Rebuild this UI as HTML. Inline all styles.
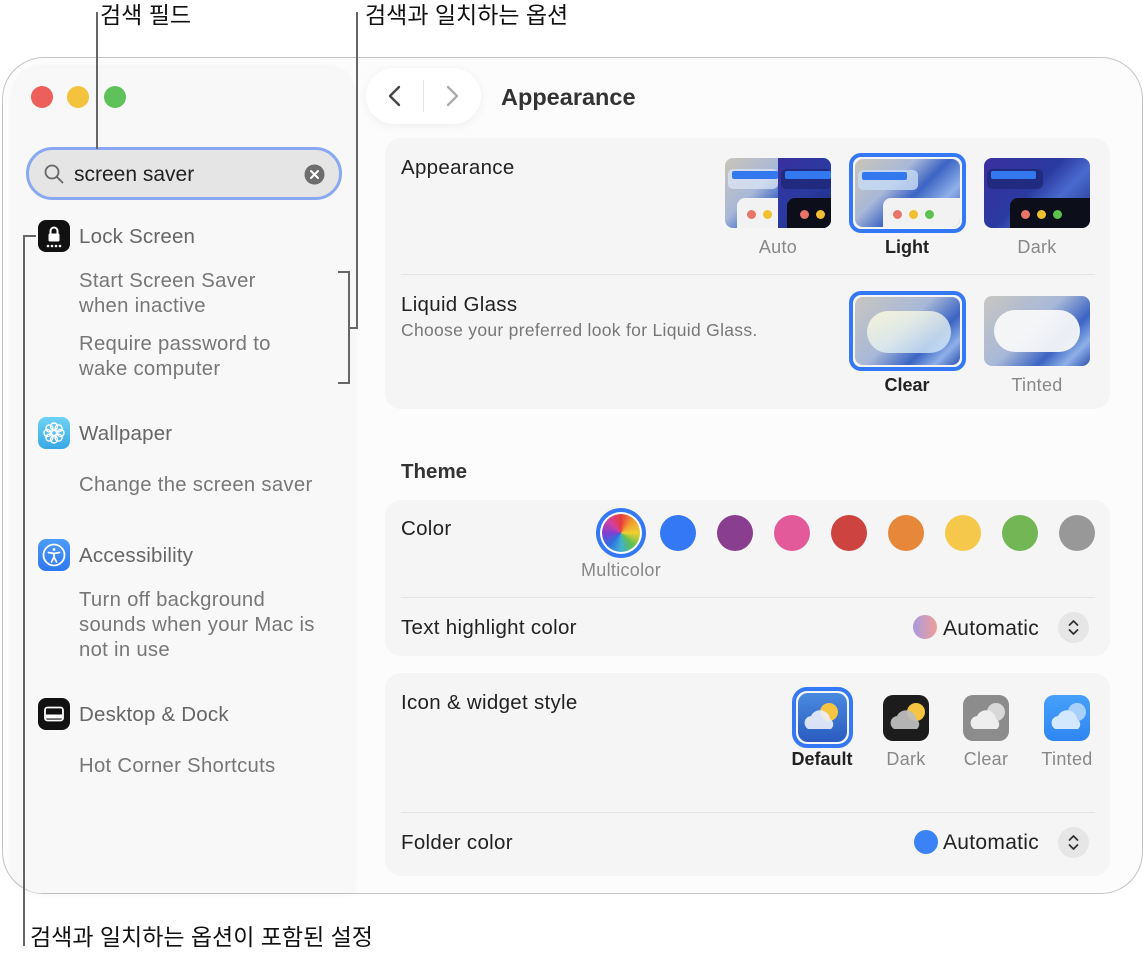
<!DOCTYPE html>
<html><head><meta charset="utf-8">
<style>
*{margin:0;padding:0;box-sizing:border-box}
body{width:1146px;height:960px;background:#fff;position:relative;overflow:hidden;font-family:"Liberation Sans","Noto Sans CJK KR",sans-serif;}
.a{position:absolute}
.t{position:absolute;white-space:nowrap;line-height:24px}
.ko{font-family:"Liberation Sans","Noto Sans CJK KR",sans-serif;font-size:23px;color:#111;line-height:30px}
.ln{position:absolute;background:#666}
.side{font-size:20.5px;color:#666;letter-spacing:.2px}
.sub{font-size:20.3px;color:#777;letter-spacing:.3px}
.card{position:absolute;left:385px;width:725px;background:#f5f5f5;border-radius:16px}
.lbl{font-size:20.5px;color:#222;letter-spacing:.3px}
.cap{font-size:18px;color:#888;text-align:center;width:120px;letter-spacing:.3px}
.capb{font-size:18px;color:#222;font-weight:bold;text-align:center;width:120px}
.dot{position:absolute;width:36px;height:36px;border-radius:50%}
.sep{position:absolute;left:401px;width:694px;height:1px;background:#e2e2e2}
.thumb{position:absolute;border-radius:8px;overflow:hidden;background:linear-gradient(135deg,#c9c4b8 0%,#a9b8d8 35%,#3c64c4 55%,#8fb0e8 75%,#2c4fb0 100%)}
.wg{position:absolute;border-radius:10px;overflow:hidden}
</style></head><body>

<!-- window -->
<div class="a" style="left:2px;top:57px;width:1141px;height:837px;border:1.5px solid #c4c4c4;border-radius:42px;background:#fcfcfc"></div>
<div class="a" style="left:14px;top:68px;width:339px;height:825px;background:#f8f8f8;border-radius:26px 26px 0 26px;box-shadow:0 0 8px rgba(0,0,0,.06)"></div>

<!-- annotations -->
<div class="t ko" style="left:100px;top:0px">검색 필드</div>
<div class="ln" style="left:96px;top:12px;width:2px;height:137px"></div>
<div class="t ko" style="left:365px;top:0px">검색과 일치하는 옵션</div>
<div class="ln" style="left:356px;top:12px;width:2px;height:317px"></div>
<div class="ln" style="left:348px;top:327px;width:10px;height:2px"></div>
<div class="ln" style="left:348px;top:271px;width:2px;height:113px"></div>
<div class="ln" style="left:338px;top:271px;width:12px;height:2px"></div>
<div class="ln" style="left:338px;top:382px;width:12px;height:2px"></div>
<div class="t ko" style="left:30px;top:922px">검색과 일치하는 옵션이 포함된 설정</div>
<div class="ln" style="left:23px;top:236px;width:2px;height:710px"></div>
<div class="ln" style="left:23px;top:235px;width:13px;height:2px"></div>

<div class="dot" style="left:31px;top:86px;width:22px;height:22px;background:#ec5f5b"></div>
<div class="dot" style="left:67px;top:86px;width:22px;height:22px;background:#f4c33e"></div>
<div class="dot" style="left:104px;top:86px;width:22px;height:22px;background:#5fc15a"></div>

<!-- search -->
<div class="a" style="left:26px;top:147px;width:316px;height:53px;border:3.5px solid #8aa8f2;border-radius:27px;background:#e5e5e5"></div>
<svg class="a" style="left:43px;top:163px" width="22" height="22" viewBox="0 0 22 22"><circle cx="9" cy="9" r="6.5" fill="none" stroke="#666" stroke-width="1.8"/><line x1="14" y1="14" x2="19.5" y2="19.5" stroke="#666" stroke-width="1.8" stroke-linecap="round"/></svg>
<div class="t" style="left:74px;top:163px;font-size:21px;color:#222">screen saver</div>
<svg class="a" style="left:304px;top:164px" width="21" height="21" viewBox="0 0 21 21"><circle cx="10.5" cy="10.5" r="10" fill="#6d6d6d"/><path d="M7 7L14 14M14 7L7 14" stroke="#fff" stroke-width="2" stroke-linecap="round"/></svg>
<div class="ln" style="left:96px;top:12px;width:2px;height:137px"></div>

<!-- sidebar items -->
<div class="a" style="left:38px;top:220px;width:32px;height:32px;border-radius:8px;background:#111"></div>
<svg class="a" style="left:38px;top:220px" width="32" height="32" viewBox="0 0 32 32"><path d="M12.5 14v-3a3.5 3.5 0 0 1 7 0v3" fill="none" stroke="#fff" stroke-width="2"/><rect x="10.5" y="13.5" width="11" height="8" rx="1.5" fill="#fff"/><g fill="#fff"><circle cx="10" cy="26" r="1.3"/><circle cx="14" cy="26" r="1.3"/><circle cx="18" cy="26" r="1.3"/><circle cx="22" cy="26" r="1.3"/></g></svg>
<div class="t side" style="left:79px;top:225px">Lock Screen</div>
<div class="t sub" style="left:79px;top:269px">Start Screen Saver</div>
<div class="t sub" style="left:79px;top:294px">when inactive</div>
<div class="t sub" style="left:79px;top:332px">Require password to</div>
<div class="t sub" style="left:79px;top:357px">wake computer</div>

<div class="a" style="left:38px;top:417px;width:32px;height:32px;border-radius:8px;background:linear-gradient(#6fd2f4,#38a8e6)"></div>
<svg class="a" style="left:38px;top:417px" width="32" height="32" viewBox="0 0 32 32" fill="none" stroke="#fff" stroke-width="1.4"><circle cx="16" cy="16" r="2.5"/><circle cx="16" cy="9.5" r="3.5"/><circle cx="16" cy="22.5" r="3.5"/><circle cx="9.5" cy="16" r="3.5"/><circle cx="22.5" cy="16" r="3.5"/><circle cx="11.4" cy="11.4" r="3.5"/><circle cx="20.6" cy="11.4" r="3.5"/><circle cx="11.4" cy="20.6" r="3.5"/><circle cx="20.6" cy="20.6" r="3.5"/></svg>
<div class="t side" style="left:79px;top:422px">Wallpaper</div>
<div class="t sub" style="left:79px;top:473px">Change the screen saver</div>

<div class="a" style="left:38px;top:539px;width:32px;height:32px;border-radius:8px;background:linear-gradient(#4c9cfb,#2f78f0)"></div>
<svg class="a" style="left:38px;top:539px" width="32" height="32" viewBox="0 0 32 32" fill="none" stroke="#fff" stroke-width="1.8"><circle cx="16" cy="16" r="10.5"/><circle cx="16" cy="10.5" r="1.4" fill="#fff" stroke="none"/><path d="M10.5 13.5L16 14.5L21.5 13.5M16 14.5V18M16 18L13.5 23M16 18L18.5 23" stroke-linecap="round"/></svg>
<div class="t side" style="left:79px;top:544px">Accessibility</div>
<div class="t sub" style="left:79px;top:588px">Turn off background</div>
<div class="t sub" style="left:79px;top:613px">sounds when your Mac is</div>
<div class="t sub" style="left:79px;top:638px">not in use</div>

<div class="a" style="left:38px;top:698px;width:32px;height:32px;border-radius:8px;background:#111"></div>
<svg class="a" style="left:38px;top:698px" width="32" height="32" viewBox="0 0 32 32"><rect x="7" y="9.5" width="18" height="13" rx="2.5" fill="none" stroke="#fff" stroke-width="1.8"/><rect x="8" y="16.5" width="16" height="4" fill="#fff"/></svg>
<div class="t side" style="left:79px;top:703px">Desktop &amp; Dock</div>
<div class="t sub" style="left:79px;top:754px">Hot Corner Shortcuts</div>

<!-- nav -->
<div class="a" style="left:366px;top:68px;width:115px;height:56px;border-radius:28px;background:#fff;box-shadow:0 2px 10px rgba(0,0,0,.06)"></div>
<svg class="a" style="left:385px;top:84px" width="20" height="24" viewBox="0 0 20 24"><path d="M14 3L5 12L14 21" fill="none" stroke="#444" stroke-width="2.3" stroke-linecap="round" stroke-linejoin="round"/></svg>
<div class="a" style="left:423px;top:80px;width:1px;height:32px;background:#e4e4e4"></div>
<svg class="a" style="left:442px;top:84px" width="20" height="24" viewBox="0 0 20 24"><path d="M6 3L15 12L6 21" fill="none" stroke="#aaa" stroke-width="2.3" stroke-linecap="round" stroke-linejoin="round"/></svg>
<div class="t" style="left:501px;top:84px;font-size:23.5px;font-weight:bold;color:#333;line-height:26px">Appearance</div>

<!-- card1 -->
<div class="card" style="top:138px;height:271px"></div>
<div class="t lbl" style="left:401px;top:156px">Appearance</div>
<div class="sep" style="top:274px"></div>
<div class="thumb" style="left:725px;top:158px;width:106px;height:70px">
  <div class="a" style="left:53px;top:0;width:53px;height:70px;background:linear-gradient(135deg,#3a2fa0,#2a3aa0 50%,#1c2c80)"></div>
  <div class="a" style="left:3px;top:11px;width:50px;height:20px;background:rgba(220,230,245,.75);border-radius:5px"></div>
  <div class="a" style="left:7px;top:13px;width:46px;height:8px;background:#3478f0;border-radius:2px"></div>
  <div class="a" style="left:56px;top:11px;width:50px;height:20px;background:rgba(30,40,120,.8);border-radius:5px"></div>
  <div class="a" style="left:60px;top:13px;width:46px;height:8px;background:#3478f0;border-radius:2px"></div>
  <div class="a" style="left:12px;top:40px;width:41px;height:34px;background:#f2f2f2;border-radius:8px 0 0 0"></div>
  <div class="a" style="left:62px;top:40px;width:44px;height:34px;background:#0c0f1a;border-radius:8px 0 0 0"></div>
  <div class="dot" style="left:22px;top:52px;width:9px;height:9px;background:#e8746a"></div>
  <div class="dot" style="left:38px;top:52px;width:9px;height:9px;background:#f0c030"></div>
  <div class="dot" style="left:75px;top:52px;width:9px;height:9px;background:#e8746a"></div>
  <div class="dot" style="left:91px;top:52px;width:9px;height:9px;background:#f0c030"></div>
</div>
<div class="a" style="left:849px;top:153px;width:117px;height:80px;border:4px solid #3478f6;border-radius:12px"></div>
<div class="thumb" style="left:855px;top:159px;width:105px;height:68px">
  <div class="a" style="left:3px;top:11px;width:60px;height:20px;background:rgba(200,220,245,.8);border-radius:5px"></div>
  <div class="a" style="left:7px;top:13px;width:45px;height:8px;background:#3478f0;border-radius:2px"></div>
  <div class="a" style="left:28px;top:39px;width:80px;height:34px;background:#f2f2f2;border-radius:8px 0 0 0"></div>
  <div class="dot" style="left:38px;top:51px;width:9px;height:9px;background:#e8746a"></div>
  <div class="dot" style="left:54px;top:51px;width:9px;height:9px;background:#f0c030"></div>
  <div class="dot" style="left:70px;top:51px;width:9px;height:9px;background:#5cc150"></div>
</div>
<div class="thumb" style="left:984px;top:158px;width:106px;height:70px;background:linear-gradient(135deg,#3a2fa0,#2a3aa0 45%,#4a6ad0 65%,#1c2c80)">
  <div class="a" style="left:3px;top:11px;width:56px;height:20px;background:rgba(30,40,120,.8);border-radius:5px"></div>
  <div class="a" style="left:7px;top:13px;width:45px;height:8px;background:#3478f0;border-radius:2px"></div>
  <div class="a" style="left:26px;top:40px;width:82px;height:34px;background:#0c0f1a;border-radius:8px 0 0 0"></div>
  <div class="dot" style="left:37px;top:52px;width:9px;height:9px;background:#e8746a"></div>
  <div class="dot" style="left:53px;top:52px;width:9px;height:9px;background:#f0c030"></div>
  <div class="dot" style="left:69px;top:52px;width:9px;height:9px;background:#5cc150"></div>
</div>
<div class="t cap" style="left:718px;top:235px">Auto</div>
<div class="t capb" style="left:847px;top:235px">Light</div>
<div class="t cap" style="left:977px;top:235px">Dark</div>

<div class="t lbl" style="left:401px;top:293px">Liquid Glass</div>
<div class="t" style="left:401px;top:318px;font-size:17.5px;color:#777;letter-spacing:.3px">Choose your preferred look for Liquid Glass.</div>
<div class="a" style="left:849px;top:291px;width:117px;height:80px;border:4px solid #3478f6;border-radius:12px"></div>
<div class="thumb" style="left:855px;top:297px;width:105px;height:68px;background:linear-gradient(135deg,#c8c6c0,#a8b8d8 45%,#3c64c4 70%,#8fb0e8 85%,#2c4fb0)">
  <div class="a" style="left:12px;top:14px;width:84px;height:42px;border-radius:21px;background:linear-gradient(160deg,rgba(255,250,220,.85),rgba(210,235,255,.75))"></div>
</div>
<div class="thumb" style="left:984px;top:296px;width:106px;height:70px;background:linear-gradient(135deg,#c8c6c0,#a8b8d8 45%,#3c64c4 70%,#8fb0e8 85%,#2c4fb0)">
  <div class="a" style="left:10px;top:14px;width:86px;height:42px;border-radius:21px;background:rgba(250,250,250,.92)"></div>
</div>
<div class="t capb" style="left:847px;top:373px">Clear</div>
<div class="t cap" style="left:977px;top:373px">Tinted</div>

<div class="t" style="left:401px;top:460px;font-size:20.5px;font-weight:bold;color:#333">Theme</div>

<!-- card2 -->
<div class="card" style="top:500px;height:156px"></div>
<div class="t lbl" style="left:401px;top:517px">Color</div>
<div class="dot" style="left:596px;top:508px;width:50px;height:50px;background:#3478f6"></div>
<div class="dot" style="left:600px;top:512px;width:42px;height:42px;background:#fff"></div>
<div class="dot" style="left:602px;top:514px;width:38px;height:38px;background:conic-gradient(#e83a3a,#f0a030,#f0d030,#60c050,#40b0d0,#3070e0,#8040d0,#d040a0,#e83a3a)"></div>
<div class="dot" style="left:660px;top:515px;background:#3478f6"></div>
<div class="dot" style="left:717px;top:515px;background:#8a3e90"></div>
<div class="dot" style="left:774px;top:515px;background:#e35a9a"></div>
<div class="dot" style="left:831px;top:515px;background:#cd4340"></div>
<div class="dot" style="left:888px;top:515px;background:#e7873a"></div>
<div class="dot" style="left:945px;top:515px;background:#f5c84c"></div>
<div class="dot" style="left:1002px;top:515px;background:#72b655"></div>
<div class="dot" style="left:1059px;top:515px;background:#989898"></div>
<div class="t" style="left:581px;top:558px;font-size:18px;color:#888;letter-spacing:.3px">Multicolor</div>
<div class="sep" style="top:597px"></div>
<div class="t lbl" style="left:401px;top:616px">Text highlight color</div>
<div class="dot" style="left:913px;top:615px;width:24px;height:24px;background:linear-gradient(90deg,#a89ae0,#f09e96)"></div>
<div class="t lbl" style="left:943px;top:617px;color:#222;font-size:21px">Automatic</div>
<div class="dot" style="left:1058px;top:612px;width:31px;height:31px;background:#e6e6e6"></div>
<svg class="a" style="left:1066px;top:617px" width="15" height="21" viewBox="0 0 15 21"><path d="M3.5 8L7.5 4L11.5 8M3.5 13L7.5 17L11.5 13" fill="none" stroke="#333" stroke-width="1.8" stroke-linecap="round" stroke-linejoin="round"/></svg>

<!-- card3 -->
<div class="card" style="top:673px;height:203px"></div>
<div class="t lbl" style="left:401px;top:691px">Icon &amp; widget style</div>
<div class="a" style="left:792px;top:687px;width:61px;height:61px;border:4px solid #3478f6;border-radius:15px"></div>
<div class="wg" style="left:798px;top:693px;width:49px;height:49px;background:linear-gradient(#4a8ae0,#2a5cc0)"></div>
<div class="wg" style="left:883px;top:695px;width:46px;height:46px;background:#1c1c1c"></div>
<div class="wg" style="left:963px;top:695px;width:46px;height:46px;background:#8c8c8c"></div>
<div class="wg" style="left:1044px;top:695px;width:46px;height:46px;background:linear-gradient(#46a0fa,#2f86f2)"></div>
<svg class="a" style="left:798px;top:693px" width="300" height="50" viewBox="0 0 300 50">
 <g><circle cx="31" cy="19" r="9" fill="#f5c542"/><path d="M10 36a7 7 0 0 1 3-13a10 10 0 0 1 19 3a6 6 0 0 1 1 10z" fill="#e8eef8" opacity=".92"/></g>
 <g transform="translate(87,2)"><circle cx="31" cy="17" r="9" fill="#f5c542"/><path d="M9 34a7 7 0 0 1 3-13a10 10 0 0 1 19 3a6 6 0 0 1 1 10z" fill="#bdbdbd" opacity=".95"/></g>
 <g transform="translate(167,2)"><circle cx="31" cy="17" r="9" fill="#d8d8d8"/><path d="M9 34a7 7 0 0 1 3-13a10 10 0 0 1 19 3a6 6 0 0 1 1 10z" fill="#eee"/></g>
 <g transform="translate(248,2)"><circle cx="31" cy="17" r="9" fill="#a8d0fb"/><path d="M9 34a7 7 0 0 1 3-13a10 10 0 0 1 19 3a6 6 0 0 1 1 10z" fill="#d4e8fd"/></g>
</svg>
<div class="t capb" style="left:762px;top:747px">Default</div>
<div class="t cap" style="left:846px;top:747px">Dark</div>
<div class="t cap" style="left:926px;top:747px">Clear</div>
<div class="t cap" style="left:1007px;top:747px">Tinted</div>
<div class="sep" style="top:812px"></div>
<div class="t lbl" style="left:401px;top:831px">Folder color</div>
<div class="dot" style="left:914px;top:830px;width:24px;height:24px;background:#3a82f6"></div>
<div class="t lbl" style="left:943px;top:831px;color:#222;font-size:21px">Automatic</div>
<div class="dot" style="left:1058px;top:827px;width:31px;height:31px;background:#e6e6e6"></div>
<svg class="a" style="left:1066px;top:832px" width="15" height="21" viewBox="0 0 15 21"><path d="M3.5 8L7.5 4L11.5 8M3.5 13L7.5 17L11.5 13" fill="none" stroke="#333" stroke-width="1.8" stroke-linecap="round" stroke-linejoin="round"/></svg>

</body></html>
